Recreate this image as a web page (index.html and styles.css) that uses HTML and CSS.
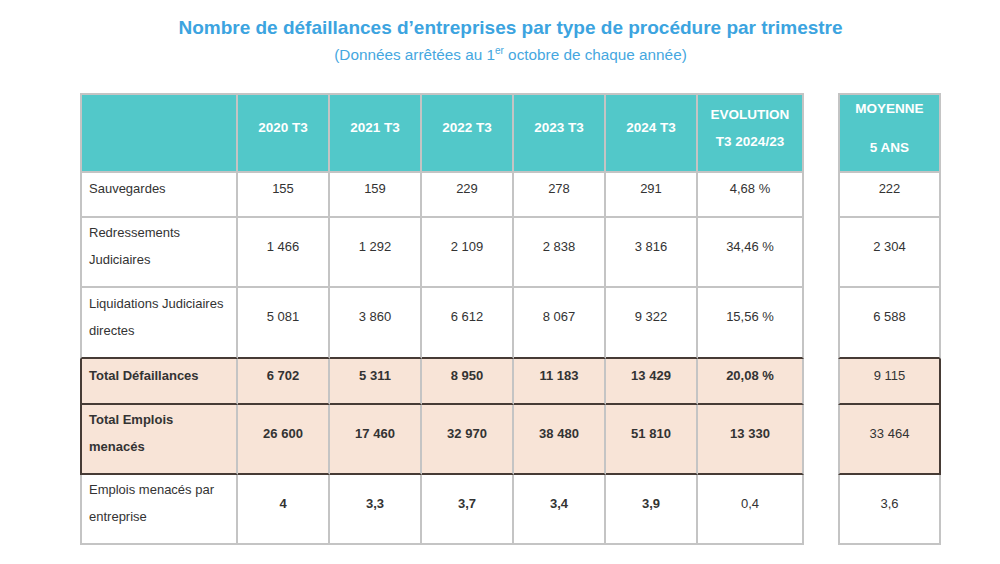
FILE: index.html
```html
<!DOCTYPE html>
<html lang="fr">
<head>
<meta charset="utf-8">
<title>Défaillances d'entreprises</title>
<link rel="stylesheet" href="styles.css">
</head>
<body>
<div class="wrap">
  <h1 class="title">Nombre de défaillances d’entreprises par type de procédure par trimestre</h1>
  <p class="subtitle">(Données arrêtées au 1<sup>er</sup> octobre de chaque année)</p>
  <div class="tables">
    <table class="main">
      <colgroup>
        <col class="c-label"><col class="c-year"><col class="c-year"><col class="c-year"><col class="c-year"><col class="c-year"><col class="c-evo">
      </colgroup>
      <tr class="r-head">
        <th class="first"></th>
        <th>2020 T3</th>
        <th>2021 T3</th>
        <th>2022 T3</th>
        <th>2023 T3</th>
        <th>2024 T3</th>
        <th>EVOLUTION<br>T3 2024/23</th>
      </tr>
      <tr class="r-1">
        <td class="first label">Sauvegardes</td>
        <td>155</td><td>159</td><td>229</td><td>278</td><td>291</td><td>4,68 %</td>
      </tr>
      <tr class="r-2">
        <td class="first label">Redressements<br>Judiciaires</td>
        <td>1 466</td><td>1 292</td><td>2 109</td><td>2 838</td><td>3 816</td><td>34,46 %</td>
      </tr>
      <tr class="r-3 pre-total">
        <td class="first label">Liquidations Judiciaires<br>directes</td>
        <td>5 081</td><td>3 860</td><td>6 612</td><td>8 067</td><td>9 322</td><td>15,56 %</td>
      </tr>
      <tr class="r-4 total">
        <td class="first label">Total Défaillances</td>
        <td>6 702</td><td>5 311</td><td>8 950</td><td>11 183</td><td>13 429</td><td>20,08 %</td>
      </tr>
      <tr class="r-5 total">
        <td class="first label">Total Emplois<br>menacés</td>
        <td>26 600</td><td>17 460</td><td>32 970</td><td>38 480</td><td>51 810</td><td>13 330</td>
      </tr>
      <tr class="r-6">
        <td class="first label">Emplois menacés par<br>entreprise</td>
        <td class="strong">4</td><td class="strong">3,3</td><td class="strong">3,7</td><td class="strong">3,4</td><td class="strong">3,9</td><td>0,4</td>
      </tr>
    </table>
    <table class="side">
      <tr class="r-head">
        <th class="first avg"><span class="avg-line">MOYENNE</span><span class="avg-line avg-second">5 ANS</span></th>
      </tr>
      <tr class="r-1"><td class="first">222</td></tr>
      <tr class="r-2"><td class="first">2 304</td></tr>
      <tr class="r-3 pre-total"><td class="first">6 588</td></tr>
      <tr class="r-4 total"><td class="first">9 115</td></tr>
      <tr class="r-5 total"><td class="first">33 464</td></tr>
      <tr class="r-6"><td class="first">3,6</td></tr>
    </table>
  </div>
</div>
</body>
</html>
```
FILE: styles.css
```css
html, body {
  margin: 0;
  padding: 0;
  background: #ffffff;
}

body {
  font-family: "Liberation Sans", Arial, sans-serif;
  color: #333333;
}

.wrap {
  width: 861px;
  margin-left: 80px;
  padding-top: 16px;
}

.title {
  margin: 0;
  font-size: 19px;
  line-height: 24px;
  font-weight: bold;
  color: #3ca4e0;
  text-align: center;
}

.subtitle {
  margin: 5px 0 0;
  font-size: 15.3px;
  line-height: 20px;
  color: #45a7e0;
  text-align: center;
}

.subtitle sup {
  font-size: 10px;
  line-height: 0;
  vertical-align: 6px;
}

.tables {
  display: flex;
  align-items: flex-start;
  gap: 34px;
  margin-top: 28px;
}

table {
  border-collapse: separate;
  border-spacing: 0;
  table-layout: fixed;
  font-size: 13px;
}

.main { width: 722px; }
.side { width: 105px; }

.c-label { width: 158px; }
.c-year { width: 92px; }
.c-evo { width: 106px; }

th, td {
  border-right: 2px solid #c4c4c4;
  border-bottom: 2px solid #c4c4c4;
  padding: 0 4px 12px;
  text-align: center;
  vertical-align: middle;
  line-height: 27px;
}

th.first, td.first {
  border-left: 2px solid #c4c4c4;
}

th {
  border-top: 2px solid #c4c4c4;
  background: #52c8c9;
  color: #ffffff;
  font-weight: bold;
  font-size: 13.5px;
  padding-bottom: 11px;
}

th.avg {
  padding-bottom: 9px;
}

.avg-line {
  display: block;
  line-height: 26px;
}

.avg-second {
  margin-top: 13px;
}

td.label {
  text-align: left;
  padding-left: 7px;
}

.r-head { height: 80px; }
.r-1 { height: 45px; }
.r-2 { height: 70px; }
.r-3 { height: 71px; }
.r-4 { height: 46px; }
.r-5 { height: 70px; }
.r-6 { height: 70px; }

.pre-total td {
  border-bottom-color: #463b35;
}

.total td {
  background: #f8e4d7;
  font-weight: bold;
  border-bottom-color: #463b35;
}

.main .total td.first {
  border-left-color: #463b35;
}

.side .total td {
  font-weight: normal;
  border-right-color: #463b35;
}

td.strong {
  font-weight: bold;
}
```
